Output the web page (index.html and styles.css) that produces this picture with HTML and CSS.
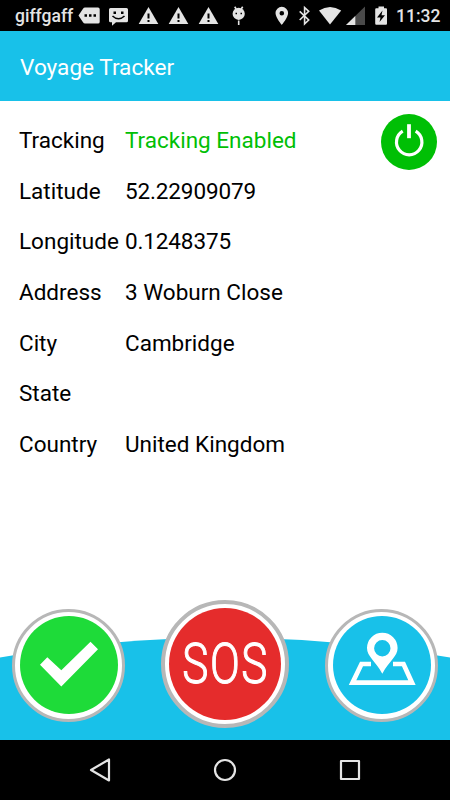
FILE: index.html
```html
<!DOCTYPE html>
<html lang="en">
<head>
  <meta charset="UTF-8">
  <meta name="viewport" content="width=device-width, initial-scale=1.0">
  <title>Voyage Tracker</title>
  <link rel="stylesheet" href="styles.css">
</head>
<body>
  <div class="status-bar">
    <span class="carrier">giffgaff</span>
    <svg class="notifications" width="172" height="31" viewBox="78 0 172 31">
      <path fill-rule="evenodd" d="M78.5 15.5L83 8.8Q83.8 7.6 85 7.6H98Q99.7 7.6 99.7 9.3V21.9Q99.7 23.5 98 23.5H85Q83.8 23.5 83 22.3ZM84.5 14.3V16.7H87V14.3ZM89 14.3V16.7H91.5V14.3ZM93.500 14.3V16.7H96V14.3Z"/>
      <path d="M110.500 8H126.500Q128 8 128 9.500V20.700Q128 22.200 126.500 22.200H116L112 25.700V22.200H110.500Q109 22.200 109 20.700V9.500Q109 8 110.500 8Z"/>
      <path class="cut" d="M113.500 11.500H116V14H113.500ZM121 11.500H123.500V14H121Z"/>
      <path class="cut-line" d="M112.500 16Q118.500 21.500 124.500 16"/>
      <g id="warning">
        <path d="M148.500 7L158.300 24H138.700Z"/>
        <path class="cut" d="M147.500 13.500H149.500V18.500H147.500ZM147.500 20H149.500V22H147.500Z"/>
      </g>
      <use href="#warning" x="30"/>
      <use href="#warning" x="60"/>
      <circle cx="238.700" cy="13.800" r="6.100"/>
      <path class="line" d="M234.700 6.700L236.200 9M242.700 6.700L241.200 9M238.700 20.500V25"/>
      <path class="cut" d="M235.500 12.700H237V14.200H235.500ZM240.500 12.700H242V14.200H240.500Z"/>
    </svg>
    <svg class="system-icons" width="116" height="31" viewBox="274 0 116 31">
      <path fill-rule="evenodd" d="M281.800 6.800A6.300 6.300 0 0 0 275.500 13.100C275.500 17.700 281.800 25 281.800 25S288.100 17.700 288.100 13.100A6.300 6.300 0 0 0 281.800 6.800ZM281.800 10.900A2.300 2.300 0 1 1 281.800 15.500A2.300 2.300 0 0 1 281.800 10.900Z"/>
      <path class="line" d="M299.700 11.300L308.700 20L304.600 23.800V7.500L308.700 11.300L299.700 20"/>
      <path d="M319 10.500Q330 3.400 341.200 10.500L330 24.600Z"/>
      <path class="signal-off" d="M346 25L365 6.500V25Z"/>
      <path d="M346 25L355.300 16V25Z"/>
      <path d="M378.500 6.500H384V8.300H386Q387 8.300 387 9.500V23.500Q387 24.700 386 24.700H376.200Q375.200 24.700 375.200 23.500V9.500Q375.200 8.300 376.200 8.300H378.500Z"/>
      <path class="cut" d="M382.500 10.500L377 17.500H380.500L379.500 22L385 15.200H381.500Z"/>
    </svg>
    <span class="clock">11:32</span>
  </div>

  <div class="header">Voyage Tracker</div>

  <div class="content">
    <div class="details">
      <div class="row"><span class="label">Tracking</span><span class="enabled">Tracking Enabled</span></div>
      <div class="row"><span class="label">Latitude</span><span class="number">52.22909079</span></div>
      <div class="row"><span class="label">Longitude</span><span class="number">0.1248375</span></div>
      <div class="row"><span class="label">Address</span><span>3 Woburn Close</span></div>
      <div class="row"><span class="label">City</span><span>Cambridge</span></div>
      <div class="row"><span class="label">State</span><span></span></div>
      <div class="row"><span class="label">Country</span><span>United Kingdom</span></div>
    </div>
    <div class="power">
      <svg width="56" height="56" viewBox="0 0 56 56">
        <path d="M21.700 17.200A12.700 12.700 0 1 0 34.700 17.200"/>
        <path class="power-bar" d="M28 10.200V24.200"/>
      </svg>
    </div>
  </div>

  <div class="actions">
    <svg class="wave" width="450" height="103" viewBox="0 0 450 103">
      <path d="M0 20.500Q225 -19 450 20.500V103H0Z"/>
    </svg>
    <div class="button check">
      <svg width="98" height="98" viewBox="20 616 98 98">
        <path class="solid" d="M40 664.700L47.300 657.300L61.300 670.300L90.500 641.700L98 649.300L61.300 686.500Z"/>
      </svg>
    </div>
    <div class="button sos">
      <svg width="112" height="112" viewBox="169 607.300 112 112">
        <text transform="translate(225.600 682.500) scale(.8 1)" text-anchor="middle">SOS</text>
      </svg>
    </div>
    <div class="button map">
      <svg width="98" height="98" viewBox="333 616 98 98">
        <path class="outline" d="M371 664H361.500L352.500 682.700H412L403.500 664H393"/>
        <path class="solid" fill-rule="evenodd" d="M382.300 632.800A15.300 15.300 0 0 0 367 648.100C367 656.500 375 660.500 382.300 673.800C389.600 660.500 397.600 656.500 397.600 648.100A15.300 15.300 0 0 0 382.300 632.800ZM382.300 640A8.200 8.200 0 1 1 382.300 656.400A8.200 8.200 0 0 1 382.300 640Z"/>
      </svg>
    </div>
  </div>

  <div class="nav-bar">
    <svg width="450" height="60" viewBox="0 0 450 60">
      <path d="M109 19.500V40.500L91 30Z"/>
      <circle cx="225" cy="30" r="10"/>
      <rect x="341" y="21" width="18" height="18"/>
    </svg>
  </div>
</body>
</html>
```

FILE: styles.css
```css
* {
  box-sizing: border-box;
}
body {
  margin: 0;
  width: 450px;
  height: 800px;
  display: flex;
  flex-direction: column;
  background: #fff;
  color: #000;
  font-family: Roboto, sans-serif;
  overflow: hidden;
}
svg {
  display: block;
}
.status-bar {
  flex: none;
  height: 31px;
  display: flex;
  align-items: center;
  padding-left: 15px;
  background: #000;
  color: #e4e4e4;
  font-size: 17.5px;
  font-weight: 500;
}
.carrier {
  width: 63px;
  padding-top: 1px;
}
.status-bar svg {
  flex: none;
  fill: #e4e4e4;
}
.system-icons {
  margin-left: 24px;
}
.clock {
  margin-left: 6px;
  padding-top: 1px;
}
.status-bar .cut {
  fill: #000;
}
.status-bar .cut-line {
  fill: none;
  stroke: #000;
  stroke-width: 1.6;
}
.status-bar .line {
  fill: none;
  stroke: #e4e4e4;
  stroke-width: 1.6;
}
.status-bar .signal-off {
  fill: #4a4a4a;
}
.header {
  flex: none;
  height: 70px;
  display: flex;
  align-items: center;
  padding: 3px 20px 0;
  background: #18c1e9;
  color: #fff;
  font-size: 22.6px;
}
.content {
  flex: 1;
  display: flex;
  justify-content: space-between;
  padding: 12.7px 13px 0 19px;
}
.row {
  display: flex;
  align-items: center;
  height: 50.67px;
  padding-top: 2px;
  font-size: 22.5px;
  white-space: nowrap;
}
.label {
  width: 106px;
}
.number {
  letter-spacing: -.13px;
}
.enabled {
  color: #00bf05;
}
.power {
  width: 56px;
  height: 56px;
  border-radius: 50%;
  background: #00bf05;
}
.power path {
  fill: none;
  stroke: #fff;
  stroke-width: 3.2;
}
.power .power-bar {
  stroke-width: 3.8;
}
.actions {
  flex: none;
  position: relative;
  height: 141px;
  display: flex;
  align-items: center;
  justify-content: space-between;
  padding: 0 12px 9px;
}
.wave {
  position: absolute;
  left: 0;
  bottom: 0;
  fill: #18c1e9;
}
.button {
  position: relative;
  width: 113px;
  height: 113px;
  display: flex;
  align-items: center;
  justify-content: center;
  border: 3.5px solid #b7b7b7;
  border-radius: 50%;
  background: #fff;
}
.button svg {
  border-radius: 50%;
}
.check svg {
  background: #1edb39;
}
.sos {
  width: 128px;
  height: 128px;
  margin-bottom: 3px;
  border-width: 4px;
}
.sos svg {
  background: #e52c2c;
}
.sos text {
  fill: #fff;
  stroke: #fff;
  stroke-width: 1.1;
  font-size: 55px;
  font-weight: 300;
  letter-spacing: 2px;
}
.map svg {
  background: #18c1e9;
}
.button .solid {
  fill: #fff;
}
.button .outline {
  fill: none;
  stroke: #fff;
  stroke-width: 4.7;
}
.nav-bar {
  flex: none;
  height: 60px;
  background: #000;
}
.nav-bar svg {
  fill: none;
  stroke: #e4e4e4;
  stroke-width: 2.2;
  stroke-linejoin: round;
}
```
